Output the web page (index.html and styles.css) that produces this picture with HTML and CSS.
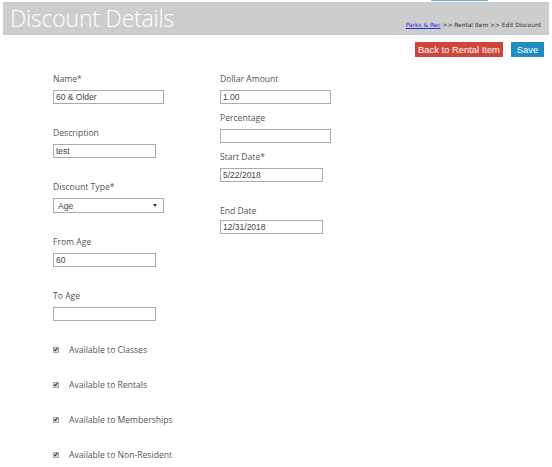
FILE: index.html
```html
<!DOCTYPE html>
<html lang="en">
<head>
<meta charset="UTF-8">
<title>Discount Details</title>
<link rel="stylesheet" href="styles.css">
</head>
<body>
    <div class="page">
        <div class="top-strip"></div>

        <!-- Header -->
        <div class="header">
            <h1 class="title">Discount Details</h1>
            <div class="breadcrumb">
                <a href="#">Parks &amp; Rec</a> &gt;&gt; Rental Item &gt;&gt; Edit Discount
            </div>
        </div>

        <div class="actions">
            <button class="btn btn-red">Back to Rental Item</button>
            <button class="btn btn-blue">Save</button>
        </div>

        <!-- Form -->
        <div class="form">
            <div class="col">
                <div class="field">
                    <label>Name*</label>
                    <input class="input wide" type="text" value="60 &amp; Older">
                </div>
                <div class="field">
                    <label>Description</label>
                    <input class="input" type="text" value="test">
                </div>
                <div class="field">
                    <label>Discount Type*</label>
                    <div class="select-wrap">
                        <select class="input wide select">
                            <option>Age</option>
                        </select>
                        <span class="arrow"></span>
                    </div>
                </div>
                <div class="field">
                    <label>From Age</label>
                    <input class="input" type="text" value="60">
                </div>
                <div class="field">
                    <label>To Age</label>
                    <input class="input" type="text" value="">
                </div>

                <div class="checks">
                    <div class="check-row"><span class="check"></span>Available to Classes</div>
                    <div class="check-row"><span class="check"></span>Available to Rentals</div>
                    <div class="check-row"><span class="check"></span>Available to Memberships</div>
                    <div class="check-row"><span class="check"></span>Available to Non-Resident</div>
                </div>
            </div>

            <div class="col">
                <div class="field tight">
                    <label>Dollar Amount</label>
                    <input class="input wide" type="text" value="1.00">
                </div>
                <div class="field tight">
                    <label>Percentage</label>
                    <input class="input wide" type="text" value="">
                </div>
                <div class="field">
                    <label>Start Date*</label>
                    <input class="input" type="text" value="5/22/2018">
                </div>
                <div class="field">
                    <label class="end-label">End Date</label>
                    <input class="input" type="text" value="12/31/2018">
                </div>
            </div>
        </div>
    </div>
</body>
</html>
```

FILE: styles.css
```css
body {
    margin: 0;
    padding: 0;
    background-color: #fff;
    font-family: 'Open Sans', 'Liberation Sans', sans-serif;
    color: #555;
}

.page {
    padding: 0 3px;
}

.top-strip {
    width: 57px;
    height: 1px;
    margin-left: 428px;
    margin-bottom: 1px;
    background-color: #6cb6e0;
}

/* Header */
.header {
    height: 33px;
    background-color: #cdcdcd;
    display: flex;
    justify-content: space-between;
    align-items: flex-end;
    padding: 0 8px 0 7px;
}

.title {
    margin: 0;
    font-size: 23px;
    font-weight: 300;
    color: #fff;
    line-height: 33px;
    letter-spacing: -0.2px;
}

.breadcrumb {
    font-family: 'DejaVu Sans', sans-serif;
    font-size: 5.9px;
    color: #333;
    margin-bottom: 7px;
}

.breadcrumb a {
    color: #2a2ae0;
}

.actions {
    display: flex;
    justify-content: flex-end;
    gap: 8px;
    margin-top: 7px;
    padding-right: 5px;
}

.btn {
    height: 15px;
    border: none;
    padding: 0;
    margin: 0;
    color: #fff;
    font-family: 'Liberation Sans', Arial, sans-serif;
    font-size: 9.4px;
    white-space: nowrap;
    cursor: pointer;
}

.btn-red {
    width: 88px;
    background-color: #d0453a;
}

.btn-blue {
    width: 33px;
    background-color: #1f8dc4;
}

/* Form */
.form {
    display: grid;
    grid-template-columns: 167px auto;
    padding-left: 50px;
    margin-top: 15px;
}

.field {
    display: flex;
    flex-direction: column;
    align-items: flex-start;
    margin-bottom: 22px;
}

.field.tight {
    margin-bottom: 7px;
}

.field label {
    font-size: 8.6px;
    line-height: 14px;
    height: 14px;
    color: #555;
    margin-bottom: 4px;
}

.end-label {
    margin-bottom: 2px !important;
}

.input {
    display: block;
    box-sizing: border-box;
    width: 103px;
    height: 14px;
    border: 1px solid #ababab;
    padding: 0 2px;
    margin: 0;
    font-family: 'Liberation Sans', Arial, sans-serif;
    font-size: 8.5px;
    color: #444;
    background-color: #fff;
    outline: none;
}

.input.wide {
    width: 111px;
}

.select-wrap {
    position: relative;
    height: 15px;
}

.select {
    height: 15px;
    appearance: none;
    -webkit-appearance: none;
    border-radius: 0;
    padding-left: 4px;
}

.arrow {
    position: absolute;
    top: 6px;
    right: 7px;
    width: 0;
    height: 0;
    border-left: 2px solid transparent;
    border-right: 2px solid transparent;
    border-top: 3px solid #333;
}

.checks {
    margin-top: 9px;
}

.check-row {
    display: flex;
    align-items: center;
    height: 14px;
    margin-bottom: 21px;
    font-size: 8.6px;
    color: #555;
}

.check {
    box-sizing: border-box;
    width: 6px;
    height: 6px;
    margin-right: 10px;
    background-color: #d8d8d8;
    border: 1px solid #aaa;
    position: relative;
}

.check::after {
    content: "";
    position: absolute;
    left: 1px;
    top: -1px;
    width: 1px;
    height: 3px;
    border-right: 1px solid #333;
    border-bottom: 1px solid #333;
    transform: rotate(40deg);
}
```
